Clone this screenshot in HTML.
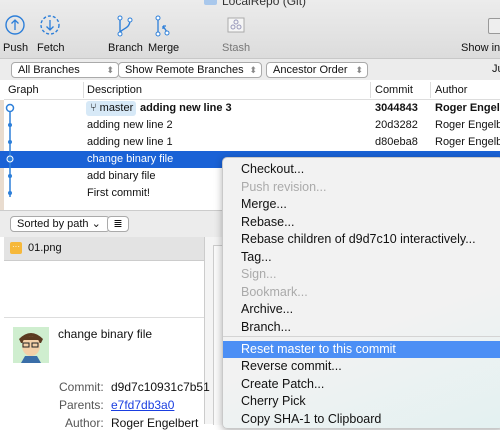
<html><head><style>
body{margin:0;width:500px;height:424px;overflow:hidden;font-family:"Liberation Sans",sans-serif;font-size:11px;color:#111;background:#fff;position:relative}
.a{position:absolute;white-space:nowrap}
.tb{left:0;top:0;width:500px;height:58px;background:linear-gradient(#ececec,#dcdcdc);border-bottom:1px solid #c8c8c8}
.lbl{font-size:11px;top:42px}
.pop{top:62px;height:14px;border:1px solid #aaa;border-radius:4px;background:#fff;font-size:11px;line-height:14px;padding-left:6px;box-sizing:content-box}
.row{left:0;width:500px;height:17px;line-height:17px}
.mi{left:241px;font-size:12.5px;height:17.5px;line-height:17.5px}
.dis{color:#aaa}
</style></head><body>
<div class="a tb"></div>
<div class="a" style="left:204px;top:-5px;width:13px;height:10px;background:#a9c8ec;border-radius:2px"></div>
<div class="a" style="left:222px;top:-6px;font-size:12px;color:#333">LocalRepo (Git)</div>
<svg class="a" style="left:0;top:12px" width="260" height="30">
<circle cx="15" cy="13" r="9" fill="none" stroke="#2d7fd9" stroke-width="1.4"/><path d="M15 18V8M11.5 11.5L15 8l3.5 3.5" fill="none" stroke="#2d7fd9" stroke-width="1.3"/>
<circle cx="50" cy="13" r="9" fill="none" stroke="#2d7fd9" stroke-width="1.4" stroke-dasharray="3 2"/><path d="M50 8v10M46.5 14.5L50 18l3.5-3.5" fill="none" stroke="#2d7fd9" stroke-width="1.3"/>
<path d="M120 6v16M120 22c0-6 10-4 10-14" fill="none" stroke="#2d7fd9" stroke-width="1.4"/><circle cx="120" cy="6" r="2" fill="#fff" stroke="#2d7fd9"/><circle cx="120" cy="22" r="2" fill="#fff" stroke="#2d7fd9"/><circle cx="130" cy="8" r="2" fill="#fff" stroke="#2d7fd9"/>
<path d="M158 6v16M163 14l4 6M163 14v3M163 14h3" fill="none" stroke="#2d7fd9" stroke-width="1.3"/><circle cx="158" cy="6" r="2" fill="#fff" stroke="#2d7fd9"/><circle cx="158" cy="22" r="2" fill="#fff" stroke="#2d7fd9"/><circle cx="167" cy="21" r="2" fill="#fff" stroke="#2d7fd9"/>
<rect x="228" y="6" width="16" height="14" fill="#f5f5f5" stroke="#aaa"/><circle cx="233" cy="15" r="2" fill="none" stroke="#99b"/><circle cx="239" cy="15" r="2" fill="none" stroke="#99b"/><circle cx="236" cy="10" r="2" fill="none" stroke="#99b"/>
</svg>
<div class="a" style="left:488px;top:18px;width:14px;height:14px;border:1px solid #999;border-radius:2px;background:#eee"></div>
<div class="a lbl" style="left:3px">Push</div><div class="a lbl" style="left:37px">Fetch</div>
<div class="a lbl" style="left:108px">Branch</div><div class="a lbl" style="left:148px">Merge</div>
<div class="a lbl" style="left:222px;color:#777">Stash</div><div class="a lbl" style="left:461px">Show in</div>
<div class="a" style="left:0;top:59px;width:500px;height:21px;background:#ececec"></div>
<div class="a pop" style="left:11px;width:100px">All Branches<span style="position:absolute;right:4px;color:#888;font-size:9px">⬍</span></div>
<div class="a pop" style="left:118px;width:136px">Show Remote Branches<span style="position:absolute;right:4px;color:#888;font-size:9px">⬍</span></div>
<div class="a pop" style="left:266px;width:94px">Ancestor Order<span style="position:absolute;right:4px;color:#888;font-size:9px">⬍</span></div>
<div class="a" style="left:492px;top:63px">Ju</div>
<div class="a" style="left:4px;top:80px;width:496px;height:19px;border-bottom:1px solid #ddd;background:#fff"></div>
<div class="a" style="left:83px;top:82px;width:1px;height:16px;background:#ddd"></div>
<div class="a" style="left:370px;top:82px;width:1px;height:16px;background:#ddd"></div>
<div class="a" style="left:430px;top:82px;width:1px;height:16px;background:#ddd"></div>
<div class="a" style="left:8px;top:84px">Graph</div><div class="a" style="left:87px;top:84px">Description</div>
<div class="a" style="left:375px;top:84px">Commit</div><div class="a" style="left:435px;top:84px">Author</div>
<div class="a" style="left:0;top:100px;width:4px;height:110px;background:#e9dccf"></div>
<div class="a row" style="top:151px;background:#1a62d6"></div>
<div class="a" style="left:86px;top:101px;width:50px;height:15px;background:#d7e9f7;border-radius:3px"></div>
<div class="a row" style="top:100px"><span class="a" style="left:90px">⑂ master</span><b class="a" style="left:140px">adding new line 3</b><b class="a" style="left:375px">3044843</b><b class="a" style="left:435px">Roger Engelbe</b></div>
<div class="a row" style="top:117px"><span class="a" style="left:87px">adding new line 2</span><span class="a" style="left:375px">20d3282</span><span class="a" style="left:435px">Roger Engelbe</span></div>
<div class="a row" style="top:134px"><span class="a" style="left:87px">adding new line 1</span><span class="a" style="left:375px">d80eba8</span><span class="a" style="left:435px">Roger Engelbe</span></div>
<div class="a row" style="top:151px;color:#fff"><span class="a" style="left:87px">change binary file</span></div>
<div class="a row" style="top:168px"><span class="a" style="left:87px">add binary file</span></div>
<div class="a row" style="top:185px"><span class="a" style="left:87px">First commit!</span></div>
<svg class="a" style="left:0;top:100px" width="20" height="100"><path d="M10 8V97" stroke="#2d7fd9" stroke-width="1.5"/><circle cx="10" cy="8" r="3.5" fill="#fff" stroke="#2d7fd9" stroke-width="1.5"/><circle cx="10" cy="25" r="2" fill="#2d7fd9"/><circle cx="10" cy="42" r="2" fill="#2d7fd9"/><circle cx="10" cy="59" r="3" fill="#2d7fd9" stroke="#fff"/><circle cx="10" cy="76" r="2" fill="#2d7fd9"/><circle cx="10" cy="93" r="2" fill="#2d7fd9"/></svg>
<div class="a" style="left:0;top:210px;width:500px;height:26px;background:#ececec;border-top:1px solid #ccc"></div>
<div class="a pop" style="left:10px;top:216px;width:92px;height:14px">Sorted by path ⌄</div>
<div class="a pop" style="left:107px;top:216px;width:20px;height:14px;padding:0;text-align:center">≣</div>
<div class="a" style="left:4px;top:237px;width:200px;height:23px;background:#e3e3e3;border-bottom:1px solid #ccc"></div>
<div class="a" style="left:10px;top:242px;width:12px;height:12px;background:#f6b83a;border-radius:2px;color:#fff;font-size:8px;text-align:center;line-height:10px">···</div>
<div class="a" style="left:28px;top:242px">01.png</div>
<div class="a" style="left:4px;top:317px;width:200px;height:1px;background:#ddd"></div>
<div class="a" style="left:204px;top:237px;width:1px;height:187px;background:#ccc"></div>
<div class="a" style="left:205px;top:237px;width:17px;height:187px;background:#f4f4f4"></div>
<div class="a" style="left:213px;top:245px;width:9px;height:179px;background:#fafafa;border-left:1px solid #ccc;border-top:1px solid #ccc"></div>
<div class="a" style="left:13px;top:327px;width:36px;height:36px;background:#cfeecf"></div>
<svg class="a" style="left:13px;top:327px" width="36" height="36"><path d="M6 12q12-12 24 0l-2 4H8z" fill="#5a3a20"/><ellipse cx="18" cy="19" rx="9" ry="10" fill="#f3d0a8"/><path d="M8 13q10-8 20 0" fill="#5a3a20"/><rect x="10" y="16" width="6" height="4" fill="none" stroke="#222"/><rect x="19" y="16" width="6" height="4" fill="none" stroke="#222"/><path d="M8 36l4-7h12l4 7z" fill="#3a6ea8"/></svg>
<div class="a" style="left:58px;top:327px;font-size:12px">change binary file</div>
<div class="a" style="left:59px;top:380px;color:#555;font-size:12px">Commit:</div><div class="a" style="left:111px;top:380px;font-size:12px">d9d7c10931c7b51</div>
<div class="a" style="left:59px;top:398px;color:#555;font-size:12px">Parents:</div><div class="a" style="left:111px;top:398px;font-size:12px;color:#1a3ee0;text-decoration:underline">e7fd7db3a0</div>
<div class="a" style="left:65px;top:416px;color:#555;font-size:12px">Author:</div><div class="a" style="left:111px;top:416px;font-size:12px">Roger Engelbert</div>
<div class="a" style="left:222px;top:157px;width:280px;height:270px;background:linear-gradient(160deg,#f2f2f2 60%,#e3f1f1);border:1px solid #c9c9c9;border-radius:5px;box-shadow:0 2px 8px rgba(0,0,0,.3)"></div>
<div class="a mi" style="top:161px">Checkout...</div>
<div class="a mi dis" style="top:178.5px">Push revision...</div>
<div class="a mi" style="top:196px">Merge...</div>
<div class="a mi" style="top:213.5px">Rebase...</div>
<div class="a mi" style="top:231px">Rebase children of d9d7c10 interactively...</div>
<div class="a mi" style="top:248.5px">Tag...</div>
<div class="a mi dis" style="top:266px">Sign...</div>
<div class="a mi dis" style="top:283.5px">Bookmark...</div>
<div class="a mi" style="top:301px">Archive...</div>
<div class="a mi" style="top:318.5px">Branch...</div>
<div class="a" style="left:223px;top:336px;width:277px;height:1px;background:#d4d4d4"></div>
<div class="a" style="left:223px;top:341px;width:277px;height:17px;background:#4c8ff5"></div>
<div class="a mi" style="top:341px;color:#fff">Reset master to this commit</div>
<div class="a mi" style="top:358px">Reverse commit...</div>
<div class="a mi" style="top:375.5px">Create Patch...</div>
<div class="a mi" style="top:393px">Cherry Pick</div>
<div class="a mi" style="top:410.5px">Copy SHA-1 to Clipboard</div>
</body></html>
